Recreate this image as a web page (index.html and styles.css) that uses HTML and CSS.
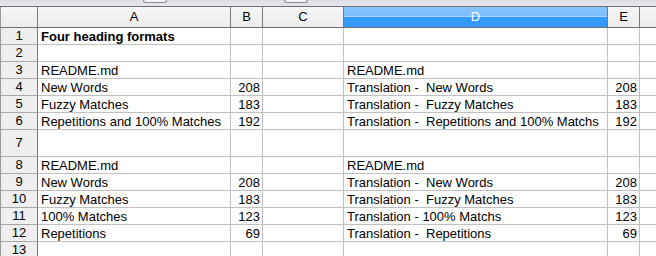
FILE: index.html
```html
<!DOCTYPE html>
<html>
<head>
<meta charset="utf-8">
<link rel="stylesheet" href="styles.css">
</head>
<body>
<div class="topbar"><span class="btn b1"></span><span class="btn b2"></span></div>
<div class="sheet">
  <div class="corner"></div><div class="ch">A</div><div class="ch">B</div><div class="ch">C</div><div class="ch sel">D</div><div class="ch">E</div><div class="ch last"></div>

  <div class="rh">1</div><div class="c b">Four heading formats</div><div class="c"></div><div class="c"></div><div class="c"></div><div class="c"></div><div class="c"></div>
  <div class="rh">2</div><div class="c"></div><div class="c"></div><div class="c"></div><div class="c"></div><div class="c"></div><div class="c"></div>
  <div class="rh">3</div><div class="c">README.md</div><div class="c"></div><div class="c"></div><div class="c">README.md</div><div class="c"></div><div class="c"></div>
  <div class="rh">4</div><div class="c">New Words</div><div class="c n">208</div><div class="c"></div><div class="c">Translation -  New Words</div><div class="c n">208</div><div class="c"></div>
  <div class="rh">5</div><div class="c">Fuzzy Matches</div><div class="c n">183</div><div class="c"></div><div class="c">Translation -  Fuzzy Matches</div><div class="c n">183</div><div class="c"></div>
  <div class="rh">6</div><div class="c">Repetitions and 100% Matches</div><div class="c n">192</div><div class="c"></div><div class="c">Translation -  Repetitions and 100% Matchs</div><div class="c n">192</div><div class="c"></div>
  <div class="rh">7</div><div class="c"></div><div class="c"></div><div class="c"></div><div class="c"></div><div class="c"></div><div class="c"></div>
  <div class="rh">8</div><div class="c">README.md</div><div class="c"></div><div class="c"></div><div class="c">README.md</div><div class="c"></div><div class="c"></div>
  <div class="rh">9</div><div class="c">New Words</div><div class="c n">208</div><div class="c"></div><div class="c">Translation -  New Words</div><div class="c n">208</div><div class="c"></div>
  <div class="rh">10</div><div class="c">Fuzzy Matches</div><div class="c n">183</div><div class="c"></div><div class="c">Translation -  Fuzzy Matches</div><div class="c n">183</div><div class="c"></div>
  <div class="rh">11</div><div class="c">100% Matches</div><div class="c n">123</div><div class="c"></div><div class="c">Translation - 100% Matchs</div><div class="c n">123</div><div class="c"></div>
  <div class="rh">12</div><div class="c">Repetitions</div><div class="c n">69</div><div class="c"></div><div class="c">Translation -  Repetitions</div><div class="c n">69</div><div class="c"></div>
  <div class="rh">13</div><div class="c"></div><div class="c"></div><div class="c"></div><div class="c"></div><div class="c"></div><div class="c"></div>
</div>
</body>
</html>
```
FILE: styles.css
```css
html, body {
  margin: 0;
  padding: 0;
  background: #ffffff;
  overflow: hidden;
}
body {
  width: 656px;
  height: 256px;
  font-family: "Liberation Sans", Arial, sans-serif;
  font-size: 13px;
  color: #000;
}
.topbar {
  height: 6px;
  background: linear-gradient(#dcdde6, #e6e7ee);
  display: flex;
  align-items: flex-start;
}
.btn {
  display: block;
  width: 22px;
  height: 2px;
  border: 1px solid #8a8d96;
  border-top: none;
  border-radius: 0 0 4px 4px;
  background: #f4f4f6;
}
.b1 { margin-left: 143px; }
.b2 { margin-left: 117px; }
.sheet {
  display: grid;
  grid-template-columns: 38px 193px 32px 81px 264px 32px 40px;
  grid-template-rows: 21px repeat(6, 17px) 27px repeat(6, 17px);
  border-top: 1px solid #6e6e6e;
}
.corner, .ch {
  background: linear-gradient(#f7f7f7, #ececec);
  border-right: 1px solid #7a7a7a;
  border-bottom: 1px solid #6e6e6e;
  display: flex;
  align-items: center;
  justify-content: center;
  line-height: 16px;
}
.corner { border-left: 1px solid #9a9a9a; }
.ch.sel {
  background: linear-gradient(#86c3ff 0, #7dbeff 45%, #a6d3ff 45%, #a6d3ff 50%, #3399ff 50%, #3399ff 100%);
  color: #fff;
}
.ch.last { border-right: none; }
.rh {
  background: #efefef;
  border-left: 1px solid #9a9a9a;
  border-right: 1px solid #7a7a7a;
  border-bottom: 1px solid #a8a8a8;
  display: flex;
  align-items: center;
  justify-content: center;
  line-height: 16px;
}
.c {
  border-right: 1px solid #c0c0c0;
  border-bottom: 1px solid #c0c0c0;
  padding: 1px 2px 0 3px;
  line-height: 15px;
  white-space: pre;
  overflow: hidden;
}
.c.n { text-align: right; }
.c.b { font-weight: bold; }
```
